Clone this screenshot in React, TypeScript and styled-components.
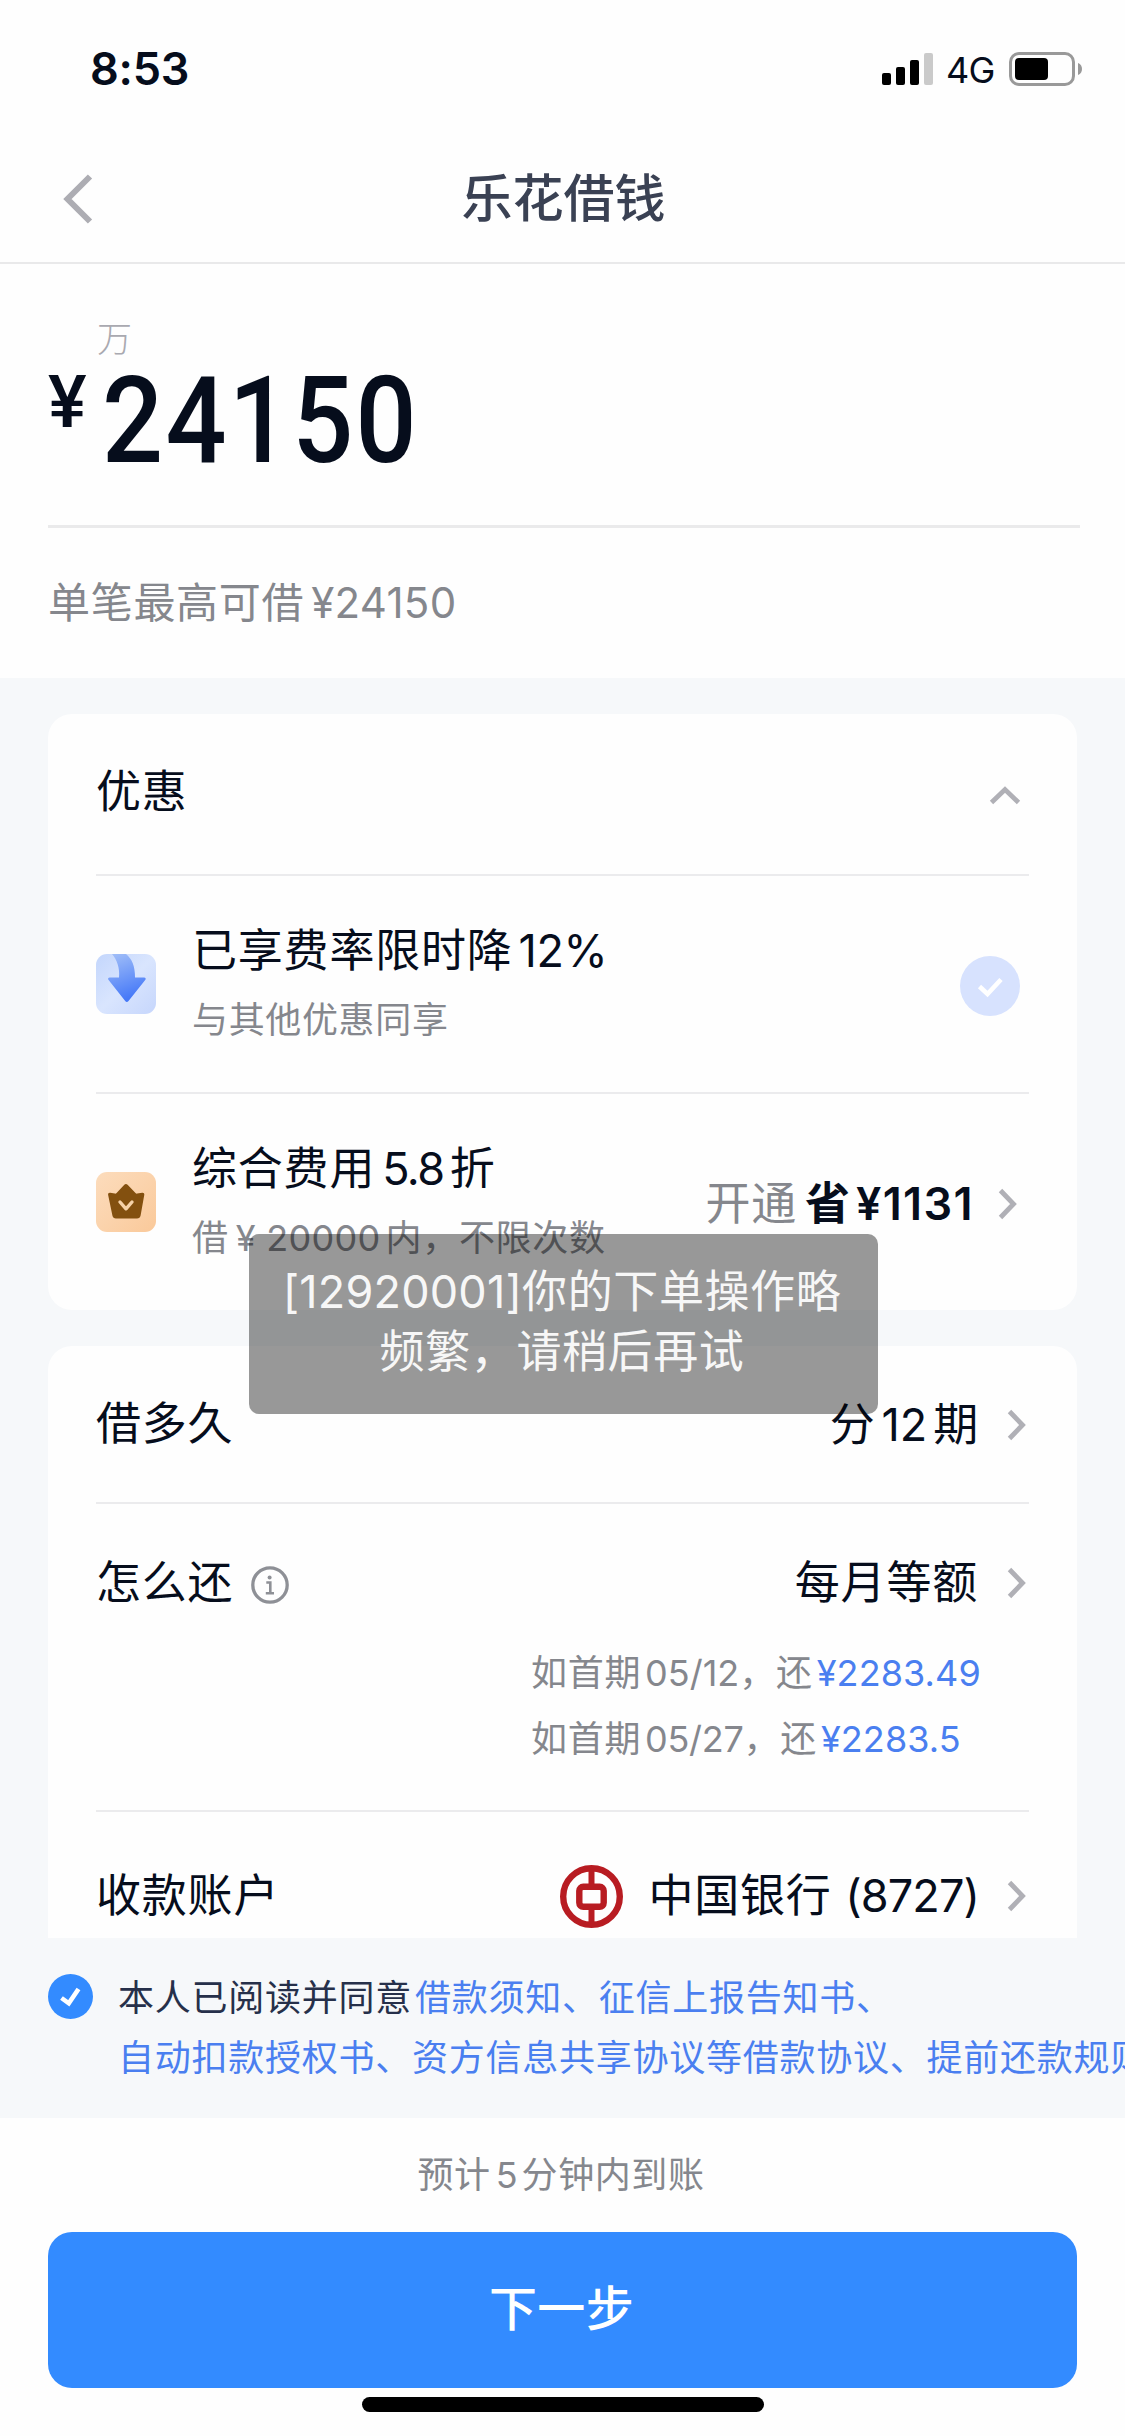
import React from "react";
import styled, { createGlobalStyle } from "styled-components";

const ink = "#060d1c";
const muted = "#85878d";
const link = "#4a7ff0";
const hairline = "#ebebed";
const blue = "#338bff";

const GlobalStyle = createGlobalStyle`
  * { box-sizing: border-box; }
  body {
    margin: 0;
    background: #fefefe;
    color: ${ink};
    font-family: Inter, "Noto Sans CJK SC", sans-serif;
    font-size: 45px;
    text-autospace: no-autospace;
  }
  svg { display: block; flex: none; }
`;

const Page = styled.div`
  position: relative;
  width: 1125px;
  height: 2436px;
  overflow: hidden;
  display: flex;
  flex-direction: column;
`;

const StatusBar = styled.div`
  height: 132px;
  flex: none;
  padding: 6px 42px 0 90px;
  display: flex;
  align-items: center;
  justify-content: space-between;
`;

const Clock = styled.span`
  font-size: 45px;
  font-weight: 600;
  line-height: 60px;
  letter-spacing: -0.2px;
`;

const StatusIcons = styled.div`
  display: flex;
  align-items: center;
`;

const Network = styled.span`
  width: 48px;
  margin: 2px 15px 0 13px;
  font-size: 36px;
  font-weight: 400;
  line-height: 40px;
  letter-spacing: -0.8px;
  white-space: nowrap;
`;

const NavBar = styled.header`
  height: 132px;
  flex: none;
  border-bottom: 2px solid #e9e9ea;
  padding: 3px 62px 0;
  display: grid;
  grid-template-columns: 100px 1fr 100px;
  align-items: center;
`;

const Title = styled.h1`
  margin: 0 0 0 2px;
  text-align: center;
  font-size: 51px;
  font-weight: 500;
  line-height: 60px;
  color: #3a4153;
`;

const AmountPanel = styled.section`
  height: 414px;
  flex: none;
  padding: 54px 45px 0 48px;
`;

const UnitHint = styled.div`
  padding-left: 49px;
  font-size: 35px;
  line-height: 42px;
  font-weight: 300;
  color: #a9a9b0;
`;

const AmountRow = styled.div`
  height: 168px;
  padding-top: 1px;
  display: flex;
  align-items: flex-start;
  border-bottom: 3px solid #eaeaeb;
`;

const Currency = styled.span`
  width: 54px;
  padding-top: 6px;
  font-family: Roboto, sans-serif;
  font-size: 72px;
  font-weight: 500;
  line-height: 72px;
  transform: scaleX(1.01);
  transform-origin: left;
`;

const AmountValue = styled.span`
  font-family: Roboto, sans-serif;
  font-size: 121px;
  font-weight: 500;
  line-height: 120px;
  letter-spacing: 2.6px;
  transform: scaleX(0.888);
  transform-origin: left;
`;

const Limit = styled.div`
  padding-top: 45px;
  font-size: 42px;
  line-height: 60px;
  letter-spacing: 0.7px;
  color: ${muted};
`;

const Scroll = styled.main`
  height: 1260px;
  flex: none;
  overflow: hidden;
  background: #f6f8fa;
  padding: 36px 48px 0;
  display: flex;
  flex-direction: column;
  gap: 36px;
`;

const Card = styled.section`
  flex: none;
  background: #fefefe;
  border-radius: 24px;
  padding: 0 48px;
`;

const Row = styled.div<{ $height: number; $last?: boolean; $lift?: number }>`
  height: ${(p) => p.$height}px;
  padding-bottom: ${(p) => p.$lift ?? 0}px;
  border-bottom: ${(p) => (p.$last ? "none" : `2px solid ${hairline}`)};
  display: flex;
  align-items: center;
`;

const Label = styled.span`
  font-size: 45px;
  line-height: 60px;
  letter-spacing: 0.8px;
  white-space: nowrap;
`;

const Right = styled.div<{ $end?: number; $drop?: number }>`
  margin-left: auto;
  margin-right: ${(p) => p.$end ?? 0}px;
  padding-top: ${(p) => p.$drop ?? 0}px;
  display: flex;
  align-items: center;
`;

const Value = styled(Label)<{ $tone?: string; $bold?: boolean; $after: number }>`
  color: ${(p) => p.$tone ?? ink};
  font-weight: ${(p) => (p.$bold ? 600 : 400)};
  margin-right: ${(p) => p.$after}px;
`;

const Num = styled.span<{ $track?: number; $before?: number; $after?: number }>`
  letter-spacing: ${(p) => p.$track ?? 0}px;
  margin-left: ${(p) => p.$before ?? 0}px;
  margin-right: ${(p) => p.$after ?? 0}px;
`;

const Offer = styled.div`
  margin-left: 36px;
  margin-bottom: 2px;
  display: flex;
  flex-direction: column;
  gap: 14px;
`;

const OfferNote = styled.span`
  font-size: 36px;
  line-height: 50px;
  letter-spacing: 0.65px;
  color: ${muted};
  white-space: nowrap;
`;

const RepayBlock = styled.div`
  height: 308px;
  border-bottom: 2px solid ${hairline};
`;

const RepayHead = styled.div`
  padding-top: 48px;
  display: flex;
  align-items: center;
`;

const InfoButton = styled.span`
  margin-left: 18px;
  padding-top: 4px;
`;

const Schedule = styled.ul`
  list-style: none;
  margin: 27px 0 0 435px;
  padding: 0;
  font-size: 36px;
  line-height: 66px;
  letter-spacing: 0.7px;
  color: ${muted};
  white-space: nowrap;
`;

const Money = styled.span`
  color: ${link};
  margin-left: 4px;
  letter-spacing: 0.1px;
`;

const Consent = styled.div`
  height: 180px;
  flex: none;
  background: #f6f8fa;
  padding: 30px 0 0 48px;
  display: flex;
  align-items: flex-start;
  gap: 25px;
`;

const ConsentText = styled.p`
  margin: 0;
  font-size: 36px;
  line-height: 60px;
  letter-spacing: 0.75px;
  color: #26304a;
  white-space: nowrap;
`;

const AgreementLink = styled.span<{ $before?: number }>`
  color: ${link};
  margin-left: ${(p) => p.$before ?? 0}px;
`;

const Tick = styled.div`
  margin-top: 6px;
`;

const Footer = styled.footer`
  flex: 1;
  padding: 27px 48px 0;
  display: flex;
  flex-direction: column;
  align-items: center;
`;

const Eta = styled.div`
  padding-right: 3px;
  font-size: 36px;
  line-height: 60px;
  letter-spacing: 0.6px;
  color: ${muted};
`;

const NextButton = styled.button`
  width: 1029px;
  height: 156px;
  margin-top: 27px;
  padding: 0 2px 10px 0;
  border: 0;
  border-radius: 24px;
  background: ${blue};
  color: #fff;
  font-family: inherit;
  font-size: 48px;
  font-weight: 500;
  letter-spacing: 0.4px;
`;

const HomeIndicator = styled.div`
  width: 402px;
  height: 15px;
  margin-top: 9px;
  border-radius: 8px;
  background: #000;
`;

const Toast = styled.div`
  position: absolute;
  left: 249px;
  top: 1234px;
  width: 629px;
  height: 180px;
  padding: 28px 3px 0 0;
  border-radius: 10px;
  background: rgba(0, 0, 0, 0.4);
  color: #f7f7f7;
  text-align: center;
  font-size: 45px;
  line-height: 60px;
  letter-spacing: 0.6px;
  white-space: nowrap;
`;

const SignalIcon = () => (
  <svg width="51" height="32" viewBox="0 0 51 32">
    <rect x="0" y="20" width="9" height="12" rx="2" />
    <rect x="14" y="14" width="9" height="18" rx="2" />
    <rect x="28" y="7" width="9" height="25" rx="2" />
    <rect x="42" y="0" width="9" height="32" rx="2" fill="#cacaca" />
  </svg>
);

const BatteryIcon = () => (
  <svg width="74" height="34" viewBox="0 0 74 34">
    <rect x="1.500" y="1.500" width="63" height="31" rx="8.500" fill="none" stroke="#999" strokeWidth="3" />
    <rect x="6" y="6" width="33" height="22" rx="4" />
    <path d="M69 11c3 1 4 3.500 4 6s-1 5-4 6z" fill="#999" />
  </svg>
);

const BackIcon = () => (
  <svg width="32" height="50" viewBox="0 0 32 50">
    <path d="M28 2.500L5.500 25 28 47.500" fill="none" stroke="#adadb3" strokeWidth="6" />
  </svg>
);

const ChevronRight = () => (
  <svg width="20" height="32" viewBox="0 0 20 32">
    <path d="M2.500 2.500L15.500 16 2.500 29.500" fill="none" stroke="#b0b0b6" strokeWidth="4.800" />
  </svg>
);

const ChevronUp = () => (
  <svg width="32" height="20" viewBox="0 0 32 20">
    <path d="M2.500 17.500L16 4.500l13.500 13" fill="none" stroke="#b0b0b6" strokeWidth="4.800" />
  </svg>
);

const RateDropIcon = () => (
  <svg width="60" height="60" viewBox="0 0 60 60">
    <defs>
      <linearGradient id="dropBg" x1="0" y1="0" x2="1" y2="1">
        <stop offset="0" stopColor="#c3d6fc" />
        <stop offset="0.5" stopColor="#d9e5fe" />
        <stop offset="1" stopColor="#c6d6fc" />
      </linearGradient>
      <linearGradient id="dropArrow" x1="0" y1="0" x2="0.3" y2="1">
        <stop offset="0" stopColor="#a3c0f8" />
        <stop offset="1" stopColor="#4679f8" />
      </linearGradient>
    </defs>
    <rect width="60" height="60" rx="11" fill="url(#dropBg)" />
    <path
      d="M16 0h14c6 5 9 12 9 23.500h9c1.700 0 2.200 1.400 1.200 2.600L32.500 47c-1 1.200-2.300 1.200-3.300 0L12.600 26.100c-1-1.200-.5-2.600 1.200-2.600H23C24 14 21 6 16 0z"
      fill="url(#dropArrow)"
    />
  </svg>
);

const CrownIcon = () => (
  <svg width="60" height="60" viewBox="0 0 60 60">
    <defs>
      <linearGradient id="crownBg" x1="0" y1="0" x2="1" y2="1">
        <stop offset="0" stopColor="#fcdcbc" />
        <stop offset="0.5" stopColor="#fbd3ac" />
        <stop offset="1" stopColor="#fac99a" />
      </linearGradient>
    </defs>
    <rect width="60" height="60" rx="11" fill="url(#crownBg)" />
    <path
      d="M28.300 12.700c1-1 2.300-1 3.300 0l7.900 8.300c.5.500 1 .7 1.700.6l5-.9c1.400-.2 2.300.6 2.100 2L44.600 43.500c-.4 2-1.600 3-3.600 3H20c-2 0-3.200-1-3.600-3L12.100 22.700c-.2-1.400.7-2.200 2.100-2l4.700.9c.7.100 1.200-.1 1.700-.6z"
      fill="#83500f"
    />
    <path d="M24 30l6 6.800 6-6.800" fill="none" stroke="#f6d2a8" strokeWidth="3.400" strokeLinecap="round" strokeLinejoin="round" />
  </svg>
);

const CheckedSoft = () => (
  <svg width="60" height="60" viewBox="0 0 60 60">
    <circle cx="30" cy="30" r="30" fill="#d7e2fe" />
    <path d="M19.500 30.500l8 7.500L41 23.500" fill="none" stroke="#fff" strokeWidth="4.600" />
  </svg>
);

const CheckedSolid = () => (
  <svg width="45" height="45" viewBox="0 0 45 45">
    <circle cx="22.500" cy="22.500" r="22.500" fill={blue} />
    <path d="M13.500 24l7.300 5.300L30.500 15" fill="none" stroke="#fff" strokeWidth="4.600" />
  </svg>
);

const InfoIcon = () => (
  <svg width="38" height="38" viewBox="0 0 38 38">
    <circle cx="19" cy="19" r="17.200" fill="none" stroke="#8e9096" strokeWidth="3.300" />
    <circle cx="18.600" cy="11.400" r="2" fill="#8e9096" />
    <path d="M15.300 16.500h4v10.500M14.800 27.300h8.200" fill="none" stroke="#8e9096" strokeWidth="2.600" />
  </svg>
);

const BankOfChinaLogo = () => (
  <svg width="63" height="63" viewBox="0 0 63 63">
    <g fill="none" stroke="#b81c22">
      <circle cx="31.500" cy="31.500" r="28.300" strokeWidth="6.400" />
      <path d="M31.500 4v17M31.500 43v17" strokeWidth="6" />
      <rect x="19.300" y="21.800" width="24.400" height="20" rx="4" strokeWidth="6.400" />
    </g>
  </svg>
);

export default function App() {
  return (
    <>
      <GlobalStyle />
      <Page>
        <StatusBar>
          <Clock>8:53</Clock>
          <StatusIcons>
            <SignalIcon />
            <Network>4G</Network>
            <BatteryIcon />
          </StatusIcons>
        </StatusBar>

        <NavBar>
          <BackIcon />
          <Title>乐花借钱</Title>
        </NavBar>

        <AmountPanel>
          <UnitHint>万</UnitHint>
          <AmountRow>
            <Currency>¥</Currency>
            <AmountValue>24150</AmountValue>
          </AmountRow>
          <Limit>
            单笔最高可借
            <Num $before={7} $track={0.3}>¥24150</Num>
          </Limit>
        </AmountPanel>

        <Scroll>
          <Card>
            <Row $height={162} $lift={4}>
              <Label>优惠</Label>
              <Right $end={8} $drop={5}>
                <ChevronUp />
              </Right>
            </Row>
            <Row $height={218}>
              <RateDropIcon />
              <Offer>
                <Label>
                  已享费率限时降
                  <Num $before={6} $track={-0.4}>12%</Num>
                </Label>
                <OfferNote>与其他优惠同享</OfferNote>
              </Offer>
              <Right $end={9} $drop={4}>
                <CheckedSoft />
              </Right>
            </Row>
            <Row $height={216} $last>
              <CrownIcon />
              <Offer>
                <Label>
                  综合费用
                  <Num $before={7} $after={6} $track={-1.5}>5.8</Num>折
                </Label>
                <OfferNote>
                  借
                  <Num $before={7} $track={0.3}>¥ 20000</Num>
                  <Num $before={5} $track={0.7}>内，不限次数</Num>
                </OfferNote>
              </Offer>
              <Right $end={11} $drop={4}>
                <Value $tone={muted} $after={8}>开通</Value>
                <Value $bold $after={24}>
                  省
                  <Num $before={5} $track={1.4}>¥1131</Num>
                </Value>
                <ChevronRight />
              </Right>
            </Row>
          </Card>

          <Card>
            <Row $height={158}>
              <Label>借多久</Label>
              <Right $end={2} $drop={2}>
                <Value $after={28}>
                  分
                  <Num $before={6} $after={6}>12</Num>期
                </Value>
                <ChevronRight />
              </Right>
            </Row>
            <RepayBlock>
              <RepayHead>
                <Label>怎么还</Label>
                <InfoButton>
                  <InfoIcon />
                </InfoButton>
                <Right $end={2} $drop={1}>
                  <Value $after={29}>每月等额</Value>
                  <ChevronRight />
                </Right>
              </RepayHead>
              <Schedule>
                <li>
                  如首期
                  <Num $before={4}>05/12</Num>，还
                  <Money>¥2283.49</Money>
                </li>
                <li>
                  如首期
                  <Num $before={4} $track={-0.3}>05/27</Num>，还
                  <Money>¥2283.5</Money>
                </li>
              </Schedule>
            </RepayBlock>
            <Row $height={170} $last $lift={2}>
              <Label>收款账户</Label>
              <Right $end={2}>
                <BankOfChinaLogo />
                <Value $after={28}>
                  <Num $before={25} $track={0.8}>中国银行</Num>
                  <Num $before={2} $track={-0.9}> (8727)</Num>
                </Value>
                <ChevronRight />
              </Right>
            </Row>
          </Card>
        </Scroll>

        <Consent>
          <Tick>
            <CheckedSolid />
          </Tick>
          <ConsentText>
            本人已阅读并同意
            <AgreementLink $before={3}>借款须知、征信上报告知书、</AgreementLink>
            <br />
            <AgreementLink>自动扣款授权书、资方信息共享协议等借款协议、提前还款规则</AgreementLink>
          </ConsentText>
        </Consent>

        <Footer>
          <Eta>
            预计
            <Num $before={5} $after={4}>5</Num>分钟内到账
          </Eta>
          <NextButton>下一步</NextButton>
          <HomeIndicator />
        </Footer>

        <Toast>
          <Num $track={0.2}>[12920001]</Num>你的下单操作略
          <br />
          频繁，请稍后再试
        </Toast>
      </Page>
    </>
  );
}
